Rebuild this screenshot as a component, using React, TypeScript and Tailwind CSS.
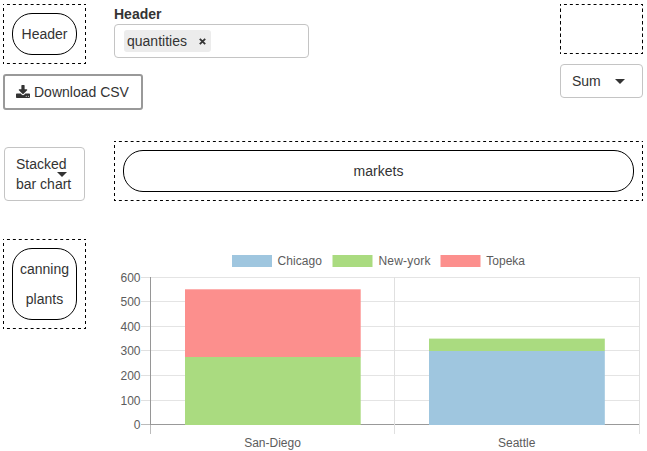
import React from "react";

const dashed =
  "p-[9px] [background:linear-gradient(to_right,#000_25%,transparent_25%_75%,#000_75%)_0_0/5.9px_1px_round_no-repeat,linear-gradient(to_right,#000_25%,transparent_25%_75%,#000_75%)_0_100%/5.9px_1px_round_no-repeat,linear-gradient(#000_25%,transparent_25%_75%,#000_75%)_0_0/1px_5.9px_no-repeat_round,linear-gradient(#000_25%,transparent_25%_75%,#000_75%)_100%_0/1px_5.9px_no-repeat_round]";
const pill = "rounded-[20px] border border-black text-center leading-[30px] py-[5px]";

function Caret({ className = "" }: { className?: string }) {
  return (
    <svg className={className} width="10" height="5" viewBox="0 0 10 5">
      <path d="M0 0H10L5 5Z" fill="#333" />
    </svg>
  );
}

const ticks = [
  { label: "600", y: 277.5 },
  { label: "500", y: 301.5 },
  { label: "400", y: 326.5 },
  { label: "300", y: 350.5 },
  { label: "200", y: 375.5 },
  { label: "100", y: 400.5 },
  { label: "0", y: 424.5 },
];

const legend = [
  { label: "Chicago", x: 232, tx: 277.5, w: 44.5, color: "#9fc6df" },
  { label: "New-york", x: 332.5, tx: 378.5, w: 52, color: "#aadb80" },
  { label: "Topeka", x: 440.5, tx: 486.3, w: 38.7, color: "#fc8f8d" },
];

function Chart() {
  return (
    <svg
      className="block"
      width="533"
      height="212"
      viewBox="114 239 533 212"
      fontFamily='"Liberation Sans", Arial, sans-serif'
      fontSize="12"
      fill="#5c5c5c"
    >
      {legend.map((l) => (
        <g key={l.label}>
          <rect x={l.x} y="255" width="40" height="12" fill={l.color} />
          <text x={l.tx} y="265" textLength={l.w}>{l.label}</text>
        </g>
      ))}
      {ticks.map((t) => (
        <g key={t.label}>
          <path d={`M141 ${t.y}H150`} stroke="#e0e0e0" />
          <path d={`M150 ${t.y}H640`} stroke={t.label === "0" ? "#999" : "#e4e4e4"} />
          <text x="140.5" y={t.y + 4} textAnchor="end">{t.label}</text>
        </g>
      ))}
      <path d="M141 424.5H150" stroke="#bbb" />
      <path d="M394.5 277V434M639.5 277V434" stroke="#e0e0e0" />
      <path d="M150.5 277V425" stroke="#969696" />
      <path d="M150.5 425V434" stroke="#bbb" />
      <rect x="185" y="289.3" width="175.7" height="67.9" fill="#fc8f8d" />
      <rect x="185" y="357" width="175.7" height="68" fill="#aadb80" />
      <rect x="429" y="338.6" width="175.8" height="12.5" fill="#aadb80" />
      <rect x="429" y="351" width="175.8" height="74" fill="#9fc6df" />
      <text x="272.5" y="447" textAnchor="middle">San-Diego</text>
      <text x="516.7" y="447" textAnchor="middle">Seattle</text>
    </svg>
  );
}

export default function App() {
  return (
    <div className="h-[451px] w-[647px] overflow-hidden bg-white pt-1 pl-[3px] font-['Liberation_Sans',Arial,sans-serif] text-[14px] leading-5 text-[#333]">
      <div className="flex h-[137px]">
        <div className="w-[111px] shrink-0">
          <div className={`w-[83px] ${dashed}`}>
            <div className={pill}>Header</div>
          </div>
          <button className="mt-[10px] flex h-9 w-[140px] items-center rounded-[3px] border-2 border-[#999] pl-[11px] whitespace-nowrap">
            <svg width="14" height="14" viewBox="0 0 1664 1664" fill="#333" className="mr-[4px] shrink-0">
              <path d="M1280 1344q0-26-19-45t-45-19-45 19-19 45 19 45 45 19 45-19 19-45zm256 0q0-26-19-45t-45-19-45 19-19 45 19 45 45 19 45-19 19-45zm128-224v320q0 40-28 68t-68 28H96q-40 0-68-28t-28-68v-320q0-40 28-68t68-28h465l135 136q58 56 136 56t136-56l136-136h464q40 0 68 28t28 68zm-325-569q17 41-14 70l-448 448q-18 19-45 19t-45-19L339 621q-31-29-14-70 17-39 59-39h256V64q0-26 19-45t45-19h256q26 0 45 19t19 45v448h256q42 0 59 39z" />
            </svg>
            Download CSV
          </button>
        </div>
        <div className="w-[195px]">
          <div className="h-5 font-bold">Header</div>
          <div className="flex h-[34px] items-center rounded border border-[#c4c4c4] pl-[9px]">
            <span className="flex h-[22px] w-[87px] items-center justify-between rounded-[3px] bg-[#ececec] pr-[5px] pl-[3px]">
              quantities
              <svg width="7" height="7" viewBox="0 0 7 7" stroke="#333" strokeWidth="1.8">
                <path d="M.8.8 6.2 6.2M6.2.8.8 6.2" />
              </svg>
            </span>
          </div>
        </div>
        <div className="ml-auto mr-1 w-[83px]">
          <div className={`h-[50px] ${dashed}`} />
          <div className="mt-[10px] flex h-[34px] items-center justify-between rounded border border-[#c4c4c4] pr-[17px] pl-[11px]">
            Sum
            <Caret />
          </div>
        </div>
      </div>
      <div className="flex h-[98px]">
        <div className="w-[111px] shrink-0 pt-[6px] pl-px">
          <div className="relative h-[54px] w-[81px] rounded border border-[#c4c4c4] pt-[6px] pl-[11px]">
            Stacked
            <br />
            bar chart
            <Caret className="absolute top-[24px] left-[52px]" />
          </div>
        </div>
        <div className={`mr-1 h-[60px] flex-1 ${dashed}`}>
          <div className={pill}>markets</div>
        </div>
      </div>
      <div className="flex items-start">
        <div className="w-[111px] shrink-0">
          <div className={`w-[83px] ${dashed}`}>
            <div className={pill}>
              canning
              <br />
              plants
            </div>
          </div>
        </div>
        <Chart />
      </div>
    </div>
  );
}
